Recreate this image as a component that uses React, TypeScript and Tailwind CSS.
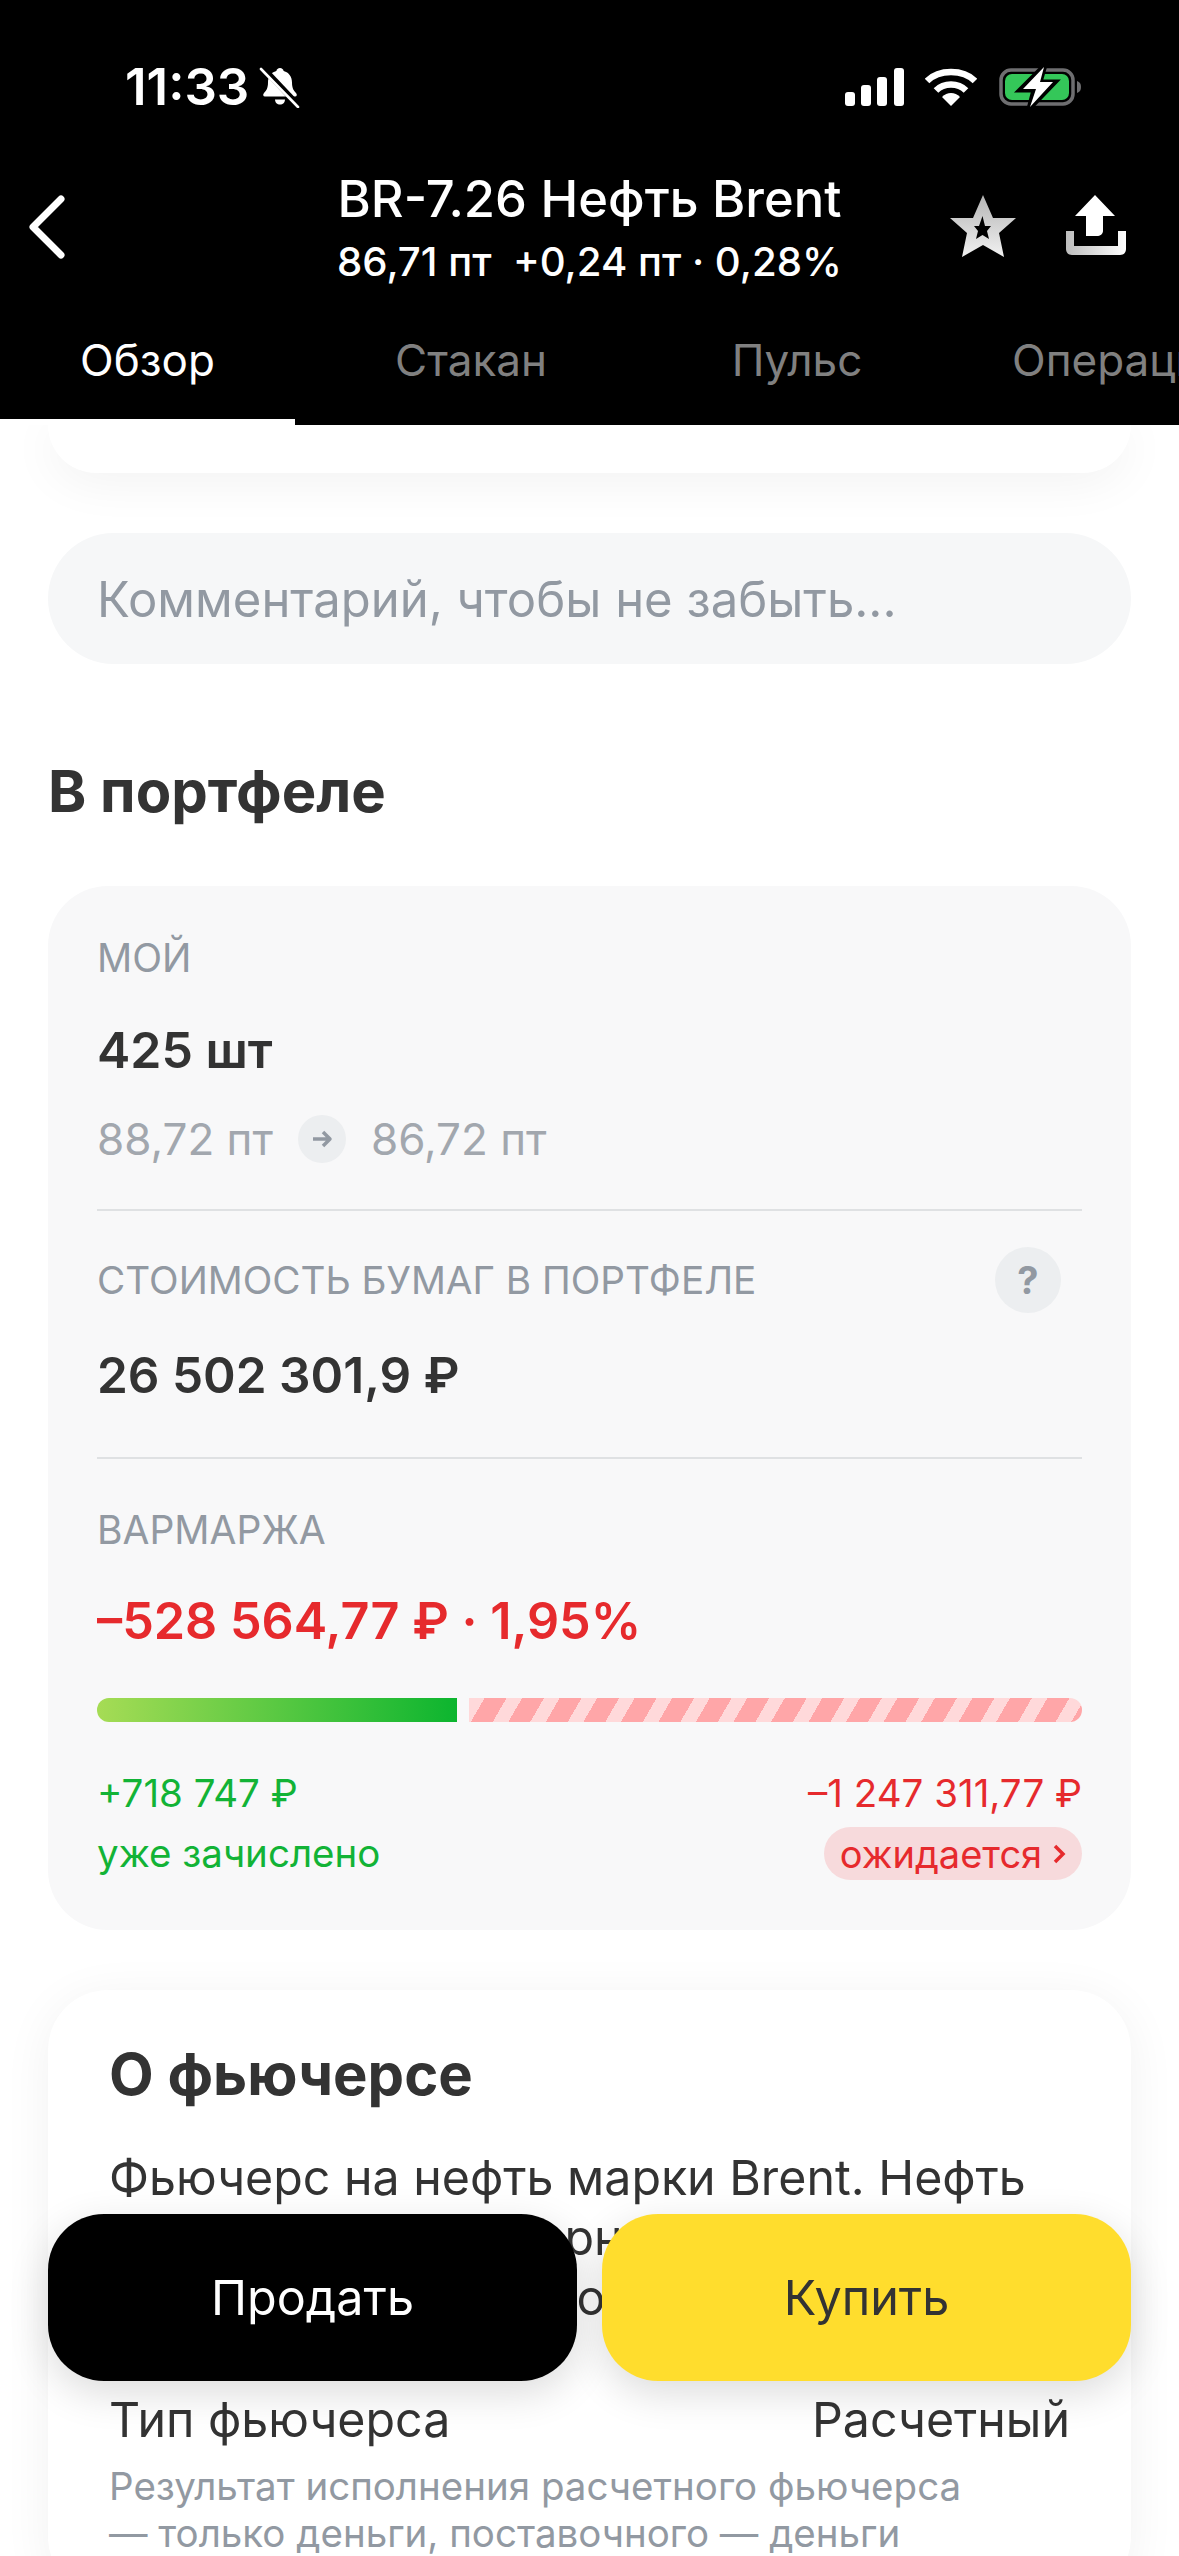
import React from 'react';

const BellOff = () => (
  <svg width="42" height="42" viewBox="0 0 42 42" className="ml-[10px]">
    <path d="M21 2c2 0 3.400 1.400 3.600 3 5.400 1.400 8.400 6 8.400 11.500 0 5.500 1.500 8 4 10.500 1.400 1.400 1 3.500-1 3.500H6c-2 0-2.400-2.100-1-3.500 2.500-2.500 4-5 4-10.500C9 11 12 6.400 17.400 5 17.600 3.400 19 2 21 2z" fill="#fff" />
    <path d="M16 33.500h10c0 3-2.200 5-5 5s-5-2-5-5z" fill="#fff" />
    <path d="M3 1l36 38" stroke="#000" strokeWidth="6" />
    <path d="M2 3l37 38" stroke="#fff" strokeWidth="2.600" strokeLinecap="round" />
  </svg>
);

const StatusIcons = () => (
  <div className="flex items-center">
    <svg width="60" height="38" viewBox="0 0 60 38">
      <rect x="0" y="24" width="10" height="14" rx="3" fill="#fff" />
      <rect x="16" y="17" width="10" height="21" rx="3" fill="#fff" />
      <rect x="32" y="9" width="10" height="29" rx="3" fill="#fff" />
      <rect x="49" y="0" width="10" height="38" rx="3" fill="#fff" />
    </svg>
    <svg width="52" height="38" viewBox="0 0 52 38" className="ml-[20px]">
      <path d="M2 13C14 1 38 1 50 13" fill="none" stroke="#fff" strokeWidth="6.500" />
      <path d="M11 22.500c8-8 22-8 30 0" fill="none" stroke="#fff" strokeWidth="6.500" />
      <path d="M17 29c5-5.500 13-5.500 18 0l-9 9z" fill="#fff" />
    </svg>
    <svg width="84" height="44" viewBox="0 0 84 44" className="ml-[22px]">
      <rect x="2" y="5" width="72" height="34" rx="10" fill="none" stroke="#6e6e70" strokeWidth="3.500" />
      <path d="M78 16c3 1 4 3 4 6s-1 5-4 6z" fill="#6e6e70" />
      <rect x="6" y="9" width="64" height="26" rx="7" fill="#34c759" />
      <path d="M46 0L21 25h14l-5 19 26-27H41z" fill="#000" stroke="#000" strokeWidth="5" />
      <path d="M45 2L24 24h13l-6 18 23-25H41z" fill="#fff" />
    </svg>
  </div>
);

const StarIcon = () => (
  <svg width="66" height="63" viewBox="0 0 66 63">
    <defs>
      <linearGradient id="starFill" x1="0" y1="0" x2="0" y2="1">
        <stop offset="0" stopColor="#b4b4b4" />
        <stop offset="1" stopColor="#f2f2f2" />
      </linearGradient>
    </defs>
    <path fillRule="evenodd" d="M33 0l10 23h23L49 38l5 24-21-12-21 12 5-24L0 23h23zM32.500 21L29 31h-5l4 5-2 8 6.500-4 6.500 4-2-8 4-5h-6z" fill="url(#starFill)" />
  </svg>
);

const ShareIcon = () => (
  <svg width="62" height="60" viewBox="0 0 62 60">
    <defs>
      <linearGradient id="trayFill" x1="0" y1="0" x2="1" y2="0">
        <stop offset="0" stopColor="#bdbdbd" />
        <stop offset="1" stopColor="#ffffff" />
      </linearGradient>
    </defs>
    <path d="M30 0l20 21H38v15c0 3-3 5-6 5H21V21H10z" fill="#fff" />
    <path d="M1 36h8v15h44V36h8v18c0 3-2 6-6 6H7c-4 0-6-3-6-6z" fill="url(#trayFill)" />
  </svg>
);

const App: React.FC = () => {
  return (
    <div className="relative w-[1179px] h-[2556px] overflow-hidden bg-white font-['Inter',sans-serif] text-[#333333]">
      <header className="relative z-10 h-[425px] bg-black text-white">
        <div className="flex items-center justify-between pt-[64px] pl-[125px] pr-[96px] h-[110px]">
          <div className="flex items-center">
            <span className="text-[51px] leading-[48px] font-semibold">11:33</span>
            <BellOff />
          </div>
          <StatusIcons />
        </div>
        <div className="relative flex justify-center pt-[59px]">
          <svg width="40" height="64" viewBox="0 0 40 64" className="absolute left-[27px] top-[85px]">
            <path d="M34 4L6 32l28 28" fill="none" stroke="#fff" strokeWidth="7" strokeLinecap="round" strokeLinejoin="round" />
          </svg>
          <div className="flex flex-col items-center">
            <div className="text-[50.700px] leading-[60px] font-medium whitespace-nowrap">BR-7.26 Нефть Brent</div>
            <div className="mt-[9px] text-[40.200px] leading-[48px] font-medium whitespace-pre">86,71 пт  +0,24 пт · 0,28%</div>
          </div>
          <div className="absolute right-[52px] top-[85px] flex items-start gap-[49px]">
            <StarIcon />
            <ShareIcon />
          </div>
        </div>
        <div className="absolute left-0 bottom-0 flex h-[90px] w-[1400px] text-[44px] leading-[50px] text-[#808080] whitespace-nowrap">
          <div className="w-[295px] shrink-0 border-b-[6px] border-white text-center text-white">Обзор</div>
          <div className="w-[352px] shrink-0 text-center">Стакан</div>
          <div className="w-[300px] shrink-0 text-center">Пульс</div>
          <div className="pl-[65px]">Операции</div>
        </div>
      </header>

      <main className="px-[48px]">
        <div className="h-[48px] rounded-b-[56px] bg-white shadow-[0_8px_50px_rgba(0,0,0,0.06)]" />

        <div className="mt-[60px] flex h-[131px] items-center rounded-[66px] bg-[#f6f7f8] pl-[49px] text-[49px] leading-[64px] pt-[2px] text-[#9299a2]">
          Комментарий, чтобы не забыть...
        </div>

        <h2 className="mt-[92px] text-[58px] leading-[70px] font-bold">В портфеле</h2>

        <section className="mt-[60px] h-[1044px] rounded-[60px] bg-[#f8f8f9] px-[49px] pt-[48px]">
          <div className="text-[39px] leading-[48px] text-[#9299a2]">МОЙ</div>
          <div className="mt-[38px] text-[50px] leading-[60px] font-semibold">425 шт</div>
          <div className="mt-[31px] flex items-center text-[44px] leading-[56px] text-[#a2a7ae]">
            88,72 пт
            <span className="mx-[25px] flex h-[48px] w-[48px] items-center justify-center rounded-full bg-[#eceef0]">
              <svg width="22" height="22" viewBox="0 0 22 22">
                <path d="M2 11h16M12 4l7 7-7 7" fill="none" stroke="#9299a2" strokeWidth="3.500" strokeLinejoin="round" />
              </svg>
            </span>
            86,72 пт
          </div>

          <div className="mt-[42px] border-t-2 border-[#dfe1e3]" />

          <div className="mt-[33px] flex h-[72px] items-center justify-between pr-[21px] text-[38.700px] text-[#9299a2]">
            <span className="whitespace-nowrap">СТОИМОСТЬ БУМАГ В ПОРТФЕЛЕ</span>
            <span className="flex h-[66px] w-[66px] items-center justify-center rounded-full bg-[#eceef0] text-[38px] font-bold">?</span>
          </div>
          <div className="mt-[29px] text-[49.500px] leading-[60px] font-semibold">26 502 301,9 ₽</div>

          <div className="mt-[52px] border-t-2 border-[#dfe1e3]" />

          <div className="mt-[47px] text-[39px] leading-[48px] text-[#9299a2]">ВАРМАРЖА</div>
          <div className="mt-[37px] text-[50.300px] leading-[60px] font-semibold text-[#e62a2d]">–528 564,77 ₽ · 1,95%</div>

          <div className="mt-[47px] flex h-[24px] gap-[12px]">
            <div className="w-[360px] rounded-l-[12px] bg-[linear-gradient(90deg,#a6dc55,#0cb52f)]" />
            <div className="flex-1 rounded-r-[12px] bg-[repeating-linear-gradient(120deg,#ffd9da_0_13.500px,#ffa6a8_13.500px_32.500px)]" />
          </div>

          <div className="mt-[46px] flex items-start justify-between text-[38.500px] leading-[50px]">
            <div className="text-[#12b336]">
              <div>+718 747 ₽</div>
              <div className="mt-[10px]">уже зачислено</div>
            </div>
            <div className="flex flex-col items-end text-[#e62a2d]">
              <div>–1 247 311,77 ₽</div>
              <div className="mt-[9px] flex h-[53px] w-[258px] items-center justify-center gap-[10px] rounded-full bg-[#f7dadc] text-[38px]">
                ожидается
                <svg width="14" height="22" viewBox="0 0 14 22">
                  <path d="M3 3l8 8-8 8" fill="none" stroke="#e62a2d" strokeWidth="3.500" />
                </svg>
              </div>
            </div>
          </div>
        </section>

        <section className="mt-[60px] rounded-[60px] bg-white px-[61px] pt-[50px] pb-[40px] shadow-[0_8px_50px_rgba(0,0,0,0.06)]">
          <h2 className="text-[58px] leading-[68px] font-bold">О фьючерсе</h2>
          <p className="mt-[40px] text-[48.300px] leading-[60px] whitespace-nowrap">
            Фьючерс на нефть марки Brent. Нефть
            <br />
            добывается в Северном море, это
            <br />
            служит общим эталоном
            <br />
            &nbsp;
          </p>
          <div className="mt-[2px] flex items-center justify-between text-[48.300px] leading-[60px]">
            <span>Тип фьючерса</span>
            <span>Расчетный</span>
          </div>
          <p className="mt-[13px] text-[38.500px] leading-[47px] text-[#9299a2] whitespace-nowrap">
            Результат исполнения расчетного фьючерса
            <br />— только деньги, поставочного — деньги
          </p>
        </section>
      </main>

      <div className="absolute left-[48px] top-[2214px] z-20 flex w-[1083px] gap-[25px] text-[48.500px]">
        <button className="flex h-[167px] flex-1 items-center justify-center rounded-[56px] bg-black pt-[2px] text-white shadow-[0_12px_40px_rgba(0,0,0,0.14)]">
          Продать
        </button>
        <button className="flex h-[167px] flex-1 items-center justify-center rounded-[56px] bg-[#ffdd2d] pt-[2px] text-[#333333] shadow-[0_12px_40px_rgba(0,0,0,0.14)]">
          Купить
        </button>
      </div>
    </div>
  );
};

export default App;
